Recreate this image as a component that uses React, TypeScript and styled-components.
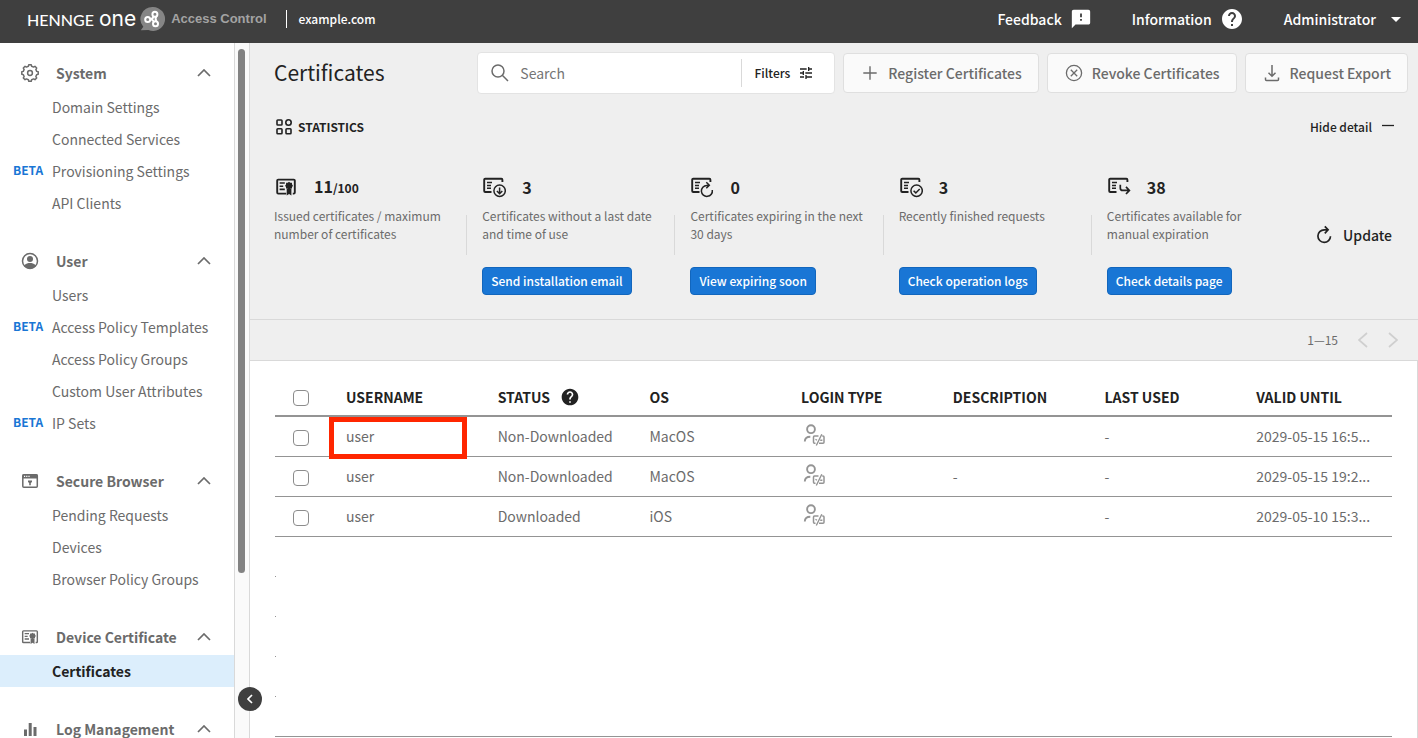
import React from "react";
import styled, { createGlobalStyle, css } from "styled-components";
import { MdArrowDropDown, MdFeedback, MdHelp, MdTune } from "react-icons/md";

const color = {
  header: "#3f3f3f",
  ink: "#222222",
  text: "#6b6b6b",
  blue: "#1976d5",
  blueEdge: "#1266bd",
  panel: "#efefef",
  line: "#d9d9d9",
  rule: "#949494",
  selected: "#dceefc",
  mark: "#ff2600",
};

const GlobalStyle = createGlobalStyle`
  * { box-sizing: border-box; }
  body {
    margin: 0;
    background: #fff;
    color: ${color.text};
    font-family: "Noto Sans CJK JP", "Open Sans", sans-serif;
    font-size: 14px;
    line-height: 20px;
  }
  button, input { font: inherit; color: inherit; }
  a { color: inherit; text-decoration: none; }
  svg { display: block; flex: none; }
`;

/* ---------- page frame ---------- */

const Page = styled.div`
  display: flex;
  flex-direction: column;
  height: 100vh;
  overflow: hidden;
`;

const Header = styled.header`
  display: flex;
  align-items: center;
  justify-content: space-between;
  flex: none;
  height: 43px;
  padding: 0 10px 5px 27px;
  background: ${color.header};
  color: #fff;
`;

const Brand = styled.div`
  display: flex;
  align-items: center;
`;

const BrandName = styled.span`
  display: flex;
  align-items: baseline;
  gap: 5px;
  font-family: Lato, sans-serif;
  font-size: 16px;
  font-weight: 500;
`;

const BrandOne = styled.span`
  font-family: Inter, sans-serif;
  font-size: 21px;
  font-weight: 400;
`;

const BrandMark = styled.span`
  margin: 0 6px 0 4px;
`;

const Product = styled.span`
  font-family: "Liberation Sans", sans-serif;
  font-size: 13px;
  font-weight: 700;
  color: #a3a3a3;
`;

const Domain = styled.span`
  margin-left: 19px;
  padding-left: 12px;
  border-left: 1px solid #fff;
  font-size: 12px;
  font-weight: 500;
  line-height: 18px;
`;

const HeaderMenu = styled.nav`
  display: flex;
  align-items: center;
  gap: 40px;
`;

const HeaderButton = styled.button`
  display: flex;
  align-items: center;
  gap: 8px;
  padding: 0;
  border: 0;
  background: none;
  font-size: 14px;
  font-weight: 500;
`;

const Body = styled.div`
  position: relative;
  display: flex;
  flex: 1;
  min-height: 0;
`;

/* ---------- sidebar ---------- */

const Sidebar = styled.nav`
  flex: none;
  width: 235px;
  padding-top: 12px;
  overflow: hidden;
  border-right: 1px solid ${color.line};
`;

const Group = styled.section`
  margin-bottom: 24px;
`;

const GroupButton = styled.button`
  display: flex;
  align-items: center;
  width: 100%;
  height: 36px;
  padding: 0 23px 0 20px;
  border: 0;
  background: none;
  text-align: left;
  font-weight: 700;
`;

const GroupName = styled.span`
  flex: 1;
  margin-left: 16px;
`;

const NavLink = styled.a<{ $current?: boolean }>`
  display: grid;
  grid-template-columns: 39px 1fr;
  align-items: center;
  height: 32px;
  padding-left: 13px;
  white-space: nowrap;
  ${(p) =>
    p.$current &&
    css`
      background: ${color.selected};
      color: ${color.ink};
      font-weight: 700;
    `}
`;

const Beta = styled.span`
  padding-bottom: 2px;
  color: ${color.blue};
  font-size: 12px;
  font-weight: 700;
`;

const ScrollTrack = styled.div`
  flex: none;
  width: 15px;
  padding: 6px 4px 0 3px;
  background: #fafafa;
  border-right: 1px solid ${color.line};
`;

const ScrollThumb = styled.div`
  height: 76%;
  border-radius: 4px;
  background: #828282;
`;

const CollapseButton = styled.button`
  position: absolute;
  left: 238px;
  bottom: 27px;
  display: grid;
  place-items: center;
  width: 24px;
  height: 24px;
  padding: 0;
  border: 0;
  border-radius: 50%;
  background: ${color.header};
  color: #fff;
`;

/* ---------- top of main column ---------- */

const Main = styled.main`
  display: flex;
  flex: 1;
  flex-direction: column;
  min-width: 0;
`;

const Summary = styled.section`
  padding-bottom: 24px;
  background: ${color.panel};
  border-bottom: 1px solid ${color.line};
`;

const Toolbar = styled.div`
  display: flex;
  align-items: center;
  gap: 8px;
  padding: 9px 10px 0 24px;
`;

const Title = styled.h1`
  flex: 1;
  margin: 0;
  padding-bottom: 2px;
  color: ${color.ink};
  font-size: 21px;
  font-weight: 400;
  line-height: 32px;
`;

const SearchBox = styled.div`
  display: flex;
  align-items: center;
  width: 358px;
  height: 42px;
  padding: 0 8px 0 12px;
  border: 1px solid #e3e3e3;
  border-radius: 4px;
  background: #fff;
`;

const SearchInput = styled.input`
  flex: 1;
  min-width: 0;
  margin-left: 10px;
  padding: 0;
  border: 0;
  outline: 0;
  background: none;
  &::placeholder { color: #757575; opacity: 1; }
`;

const FilterButton = styled.button`
  display: flex;
  align-items: center;
  gap: 8px;
  height: 28px;
  padding: 0 12px 0 13px;
  border: 0;
  border-left: 1px solid ${color.line};
  background: none;
  color: ${color.ink};
  font-size: 12px;
  font-weight: 500;
`;

const ActionButton = styled.button`
  display: flex;
  align-items: center;
  gap: 8px;
  height: 40px;
  padding: 0 16px;
  border: 1px solid #dfdfdf;
  border-radius: 4px;
  background: #fafafa;
  font-weight: 500;
  white-space: nowrap;
`;

const StatsHead = styled.div`
  display: flex;
  align-items: center;
  justify-content: space-between;
  height: 24px;
  margin: 21px 24px 36px 26px;
  color: ${color.ink};
  font-size: 12px;
`;

const StatsTitle = styled.h2`
  display: flex;
  align-items: center;
  gap: 6px;
  margin: 0;
  font-size: 12px;
  font-weight: 700;
`;

const PlainButton = styled.button<{ $large?: boolean }>`
  display: flex;
  align-items: center;
  gap: 10px;
  padding: 0;
  border: 0;
  background: none;
  color: ${color.ink};
  font-size: ${(p) => (p.$large ? 14 : 12)}px;
  font-weight: 500;
`;

const StatsBody = styled.div`
  display: flex;
  align-items: center;
  padding: 0 26px 0 24px;
`;

const StatsGrid = styled.div`
  display: grid;
  flex: 1;
  grid-template-columns: repeat(5, 1fr);
`;

const Stat = styled.article`
  position: relative;
  padding-right: 16px;
  &:not(:last-child)::after {
    content: "";
    position: absolute;
    top: 40px;
    right: 15px;
    width: 1px;
    height: 40px;
    background: ${color.line};
  }
`;

const StatValue = styled.div`
  display: grid;
  grid-template-columns: 24px 1fr;
  gap: 16px;
  align-items: center;
  height: 24px;
  color: ${color.ink};
  font-size: 16px;
  font-weight: 700;
`;

const StatLimit = styled.small`
  font-size: 12px;
`;

const StatText = styled.p`
  height: 36px;
  margin: 8px 0 24px;
  padding-right: 16px;
  font-size: 12px;
  line-height: 18px;
`;

const StatButton = styled.button`
  display: block;
  height: 28px;
  padding: 0 8px;
  border: 1px solid ${color.blueEdge};
  border-radius: 4px;
  background: ${color.blue};
  color: #fff;
  font-size: 12px;
  font-weight: 500;
  white-space: nowrap;
`;

const ButtonSlot = styled.div`
  height: 28px;
`;

const Pager = styled.div`
  display: flex;
  align-items: center;
  justify-content: flex-end;
  flex: none;
  gap: 20px;
  height: 41px;
  padding-right: 20px;
  background: ${color.panel};
  border-bottom: 1px solid ${color.line};
  font-size: 12px;
`;

const PagerButton = styled.button`
  padding: 0;
  border: 0;
  background: none;
  color: #cfcfcf;
`;

/* ---------- table ---------- */

const TableArea = styled.section`
  flex: 1;
  min-height: 0;
  overflow: hidden;
  padding: 16px 25px 0;
  border-right: 1px solid ${color.line};
`;

const Table = styled.table`
  width: 100%;
  table-layout: fixed;
  border-spacing: 0;
  text-align: left;
`;

const HeadCell = styled.th<{ $narrow?: boolean }>`
  width: ${(p) => (p.$narrow ? "55px" : "auto")};
  height: 40px;
  padding: 1px 0 0 ${(p) => (p.$narrow ? 18 : 16)}px;
  border-bottom: 2px solid ${color.rule};
  color: ${color.ink};
  font-size: 14px;
  font-weight: 700;
`;

const HeadLabel = styled.span`
  display: flex;
  align-items: center;
  gap: 10px;
`;

const Cell = styled.td<{ $narrow?: boolean }>`
  position: relative;
  height: 40px;
  padding: 0 0 ${(p) => (p.$narrow ? 0 : 2)}px ${(p) => (p.$narrow ? 18 : 16)}px;
  border-bottom: 1px solid ${color.rule};
  white-space: nowrap;
`;

const Highlight = styled.span`
  position: absolute;
  inset: 0 15px -3px -1px;
  z-index: 1;
  border: 5px solid ${color.mark};
  pointer-events: none;
`;

const Check = styled.input`
  display: block;
  appearance: none;
  width: 16px;
  height: 16px;
  margin: 2px 0 0;
  border: 1px solid #8c8c8c;
  border-radius: 4px;
  background: #fff;
`;

const BlankCell = styled.td<{ $last: boolean }>`
  height: 40px;
  padding: 0;
  vertical-align: bottom;
  border-bottom: ${(p) => (p.$last ? `1px solid ${color.rule}` : "0")};
`;

const Tick = styled.div`
  width: 1px;
  height: 1px;
  background: ${color.rule};
`;

/* ---------- icons ---------- */

const stroke = (width: number) =>
  ({ fill: "none", stroke: "currentColor", strokeWidth: width }) as const;

const gearPoints = Array.from({ length: 8 }, (_, i) =>
  [
    [-14, 8.3],
    [-9, 6.9],
    [9, 6.9],
    [14, 8.3],
  ].map(([offset, radius]) => {
    const a = ((i * 45 + 22.5 + offset) * Math.PI) / 180;
    return `${10 + radius * Math.cos(a)},${10 + radius * Math.sin(a)}`;
  }),
)
  .flat()
  .join(" ");

const GearIcon = () => (
  <svg width="20" height="20" viewBox="0 0 20 20" {...stroke(1.5)} strokeLinejoin="round">
    <polygon points={gearPoints} />
    <circle cx="10" cy="10" r="2.4" />
  </svg>
);

const UserIcon = () => (
  <svg width="20" height="20" viewBox="0 0 20 20">
    <circle cx="10" cy="10" r="7.5" {...stroke(1.5)} />
    <circle cx="10" cy="8" r="3" fill="currentColor" />
    <path d="M4 14.5C6 12.6 8 12 10 12s4 .6 6 2.500C14.500 16.700 12.500 18 10 18s-4.500-1.300-6-3.500Z" fill="currentColor" />
  </svg>
);

const BrowserIcon = () => (
  <svg width="20" height="20" viewBox="0 0 20 20">
    <rect x="2.800" y="3.800" width="14.500" height="12.400" rx="1" {...stroke(1.5)} />
    <path d="M2.500 3.500h15v4h-15Z" fill="currentColor" />
    <path d="M4 5.300h1.200M6.200 5.300h1.200M8.400 5.300h1.200" stroke="#fff" strokeWidth="1.200" />
    <path d="M8 9.500h4v1.600l-1.200 1v2.200H9.200v-2.200L8 11.100Z" fill="currentColor" />
  </svg>
);

const MedalCertificate = ({ size, weight }: { size: number; weight: number }) => (
  <svg width={size} height={size} viewBox="0 0 24 24">
    <path d="M12.200 18.600H4.200a1 1 0 0 1-1-1V5.600a1 1 0 0 1 1-1h15.600a1 1 0 0 1 1 1v12a1 1 0 0 1-1 1h-1" {...stroke(weight)} />
    <path d="M5.600 8h5.200M5.600 11.200h3.600M5.600 14.400h5.200" {...stroke(1.600)} />
    <path d="m15 6.800 1.300.9 1.600.1.200 1.600.9 1.300-.9 1.300-.2 1.500-1.600.2-1.300.9-1.300-.9-1.600-.2-.1-1.500-.9-1.300.9-1.300.1-1.600 1.600-.1Z" fill="currentColor" />
    <path d="M12.700 13.800h4.700v6.700l-2.350-1.500-2.350 1.500Z" fill="currentColor" />
  </svg>
);

const ChartIcon = () => (
  <svg width="20" height="20" viewBox="0 0 20 20" fill="currentColor">
    <path d="M4 10.500h3v6.500H4ZM8.700 4h3v13h-3ZM13.500 8h3v9h-3Z" />
  </svg>
);

const Chevron = ({ to, width, height, weight = 1.5 }: { to: "up" | "left" | "right"; width: number; height: number; weight?: number }) => {
  const d = {
    up: `M1 ${height - 1}L${width / 2} 1L${width - 1} ${height - 1}`,
    left: `M${width - 1} 1L1 ${height / 2}L${width - 1} ${height - 1}`,
    right: `M1 1L${width - 1} ${height / 2}L1 ${height - 1}`,
  }[to];
  return (
    <svg width={width} height={height} viewBox={`0 0 ${width} ${height}`} {...stroke(weight)}>
      <path d={d} />
    </svg>
  );
};

const LogoIcon = () => (
  <svg width="25" height="26" viewBox="0 0 25 26">
    <path d="M13 1a12 12 0 1 1-4.500 23.100L.8 24.300l2.500-3.600A12 12 0 0 1 13 1Z" fill="#858585" />
    <g fill="none" stroke="#fff" strokeWidth="2">
      <circle cx="14.900" cy="8.300" r="2.500" />
      <circle cx="7.700" cy="13.500" r="2.500" />
      <circle cx="15.500" cy="17.700" r="2.500" />
      <path d="M13.800 10.700c-.7 1.900-1.700 2.400-3.600 2.600 1.800.1 2.900.7 3.600 2.300" />
      <path d="M16.200 10.500c-.9 1.600-.9 3.100.2 4.600" />
    </g>
  </svg>
);

const SearchIcon = () => (
  <svg width="20" height="20" viewBox="0 0 20 20" {...stroke(1.5)}>
    <circle cx="8" cy="8" r="6" />
    <path d="m12.300 12.300 5.700 5.700" />
  </svg>
);

const PlusIcon = () => (
  <svg width="20" height="20" viewBox="0 0 20 20" {...stroke(1.400)}>
    <path d="M10 3.300v13.400M3.300 10h13.400" />
  </svg>
);

const RevokeIcon = () => (
  <svg width="20" height="20" viewBox="0 0 20 20" {...stroke(1.300)}>
    <circle cx="10" cy="10" r="7.600" />
    <path d="m6.800 6.800 6.400 6.400M13.200 6.800l-6.400 6.400" />
  </svg>
);

const ExportIcon = () => (
  <svg width="20" height="20" viewBox="0 0 20 20" {...stroke(1.500)}>
    <path d="M10 2v11M6.500 9.700l3.500 3.500 3.500-3.500M3.500 14.500v2a1 1 0 0 0 1 1h11a1 1 0 0 0 1-1v-2" />
  </svg>
);

const GridIcon = () => (
  <svg width="16" height="16" viewBox="0 0 16 16" {...stroke(1.600)}>
    <rect x="1" y="1" width="5" height="5" rx=".8" />
    <circle cx="12.500" cy="3.500" r="2.700" />
    <rect x="1" y="9.800" width="5" height="5" rx=".8" />
    <rect x="10" y="9.800" width="5" height="5" rx=".8" />
  </svg>
);

const MinusIcon = () => (
  <svg width="12" height="12" viewBox="0 0 12 12" {...stroke(1.300)}>
    <path d="M0 4.500h12" />
  </svg>
);

const UpdateIcon = () => (
  <svg width="18" height="20" viewBox="0 0 18 20" {...stroke(1.700)}>
    <path d="M12.500 4.800H9.200a6.300 6.300 0 1 0 6.300 6.400M9.800 1.300l3.300 3.500-3.300 3.500" />
  </svg>
);

type Overlay = "down" | "renew" | "check" | "forward";

const overlays: Record<Overlay, React.ReactNode> = {
  down: (
    <>
      <circle cx="17.600" cy="15.700" r="5.700" />
      <path d="M17.600 12.500v6M14.900 16l2.700 2.700 2.700-2.700" />
    </>
  ),
  renew: <path d="M22.300 15a5.500 5.500 0 1 1-5.500-4.600h2.500M16.300 7.300l3 3-3 3" />,
  check: (
    <>
      <circle cx="17.600" cy="15.700" r="5.700" />
      <path d="m14.600 15.700 2.200 2.200 3.900-4" />
    </>
  ),
  forward: <path d="M13.300 9.700v3.200a2.500 2.500 0 0 0 2.500 2.500h6.500M19 11.800l3.400 3.600-3.400 3.600" strokeWidth="1.700" />,
};

const StatIcon = ({ overlay }: { overlay?: Overlay }) =>
  overlay ? (
    <svg width="24" height="24" viewBox="0 0 24 24" {...stroke(1.500)}>
      <path d="M9.500 17H3.200a1 1 0 0 1-1-1V4.700a1 1 0 0 1 1-1h16.200a1 1 0 0 1 1 1V7" strokeWidth="1.900" />
      <path d="M5 7.600h5M5 10.400h4M5 13.200h4" />
      {overlays[overlay]}
    </svg>
  ) : (
    <MedalCertificate size={24} weight={1.900} />
  );

const LoginTypeIcon = () => (
  <svg width="24" height="24" viewBox="0 1 24 24" fill="none" stroke="#949494" strokeWidth="1.900" role="img" aria-label="Login type">
    <circle cx="10" cy="6.200" r="3.900" />
    <path d="M3.800 18.500c0-3.200 1.800-4.700 5.500-4.700" />
    <path d="M17.500 13.100h-4a1 1 0 0 0-1 1v5.200a1 1 0 0 0 1 1h1M18 20.300h4a1 1 0 0 0 1-1v-5.200a1 1 0 0 0-1-1h-.8" strokeWidth="1.500" />
    <path d="M15.300 22.500l5.500-11.300M14.500 16.300l1.400 1M19.200 17.300h2.200" strokeWidth="1.400" />
  </svg>
);

/* ---------- data ---------- */

const groups = [
  {
    name: "System",
    icon: <GearIcon />,
    links: [{ label: "Domain Settings" }, { label: "Connected Services" }, { label: "Provisioning Settings", beta: true }, { label: "API Clients" }],
  },
  {
    name: "User",
    icon: <UserIcon />,
    links: [
      { label: "Users" },
      { label: "Access Policy Templates", beta: true },
      { label: "Access Policy Groups" },
      { label: "Custom User Attributes" },
      { label: "IP Sets", beta: true },
    ],
  },
  {
    name: "Secure Browser",
    icon: <BrowserIcon />,
    links: [{ label: "Pending Requests" }, { label: "Devices" }, { label: "Browser Policy Groups" }],
  },
  {
    name: "Device Certificate",
    icon: <MedalCertificate size={20} weight={1.700} />,
    links: [{ label: "Certificates", current: true }],
  },
  { name: "Log Management", icon: <ChartIcon />, links: [] },
] as { name: string; icon: React.ReactNode; links: { label: string; beta?: boolean; current?: boolean }[] }[];

const stats: { value: string; limit?: string; text: string; action?: string; overlay?: Overlay }[] = [
  { value: "11", limit: "/100", text: "Issued certificates / maximum number of certificates" },
  { value: "3", text: "Certificates without a last date and time of use", action: "Send installation email", overlay: "down" },
  { value: "0", text: "Certificates expiring in the next 30 days", action: "View expiring soon", overlay: "renew" },
  { value: "3", text: "Recently finished requests", action: "Check operation logs", overlay: "check" },
  { value: "38", text: "Certificates available for manual expiration", action: "Check details page", overlay: "forward" },
];

const rows = [
  { user: "user", status: "Non-Downloaded", os: "MacOS", description: "", lastUsed: "-", until: "2029-05-15 16:5...", marked: true },
  { user: "user", status: "Non-Downloaded", os: "MacOS", description: "-", lastUsed: "-", until: "2029-05-15 19:2..." },
  { user: "user", status: "Downloaded", os: "iOS", description: "", lastUsed: "-", until: "2029-05-10 15:3..." },
];

const blankRows = 5;

export default function App() {
  return (
    <Page>
      <GlobalStyle />
      <Header>
        <Brand>
          <BrandName>
            HENNGE <BrandOne>one</BrandOne>
          </BrandName>
          <BrandMark>
            <LogoIcon />
          </BrandMark>
          <Product>Access Control</Product>
          <Domain>example.com</Domain>
        </Brand>
        <HeaderMenu>
          <HeaderButton>
            Feedback <MdFeedback size={22} />
          </HeaderButton>
          <HeaderButton>
            Information <MdHelp size={24} />
          </HeaderButton>
          <HeaderButton>
            Administrator <MdArrowDropDown size={24} />
          </HeaderButton>
        </HeaderMenu>
      </Header>

      <Body>
        <Sidebar>
          {groups.map((group) => (
            <Group key={group.name}>
              <GroupButton aria-expanded="true">
                {group.icon}
                <GroupName>{group.name}</GroupName>
                <Chevron to="up" width={14} height={8} weight={1.700} />
              </GroupButton>
              {group.links.map((link) => (
                <NavLink key={link.label} href="#" $current={link.current} aria-current={link.current ? "page" : undefined}>
                  <Beta>{link.beta ? "BETA" : ""}</Beta>
                  {link.label}
                </NavLink>
              ))}
            </Group>
          ))}
        </Sidebar>
        <ScrollTrack>
          <ScrollThumb />
        </ScrollTrack>

        <Main>
          <Summary>
            <Toolbar>
              <Title>Certificates</Title>
              <SearchBox>
                <SearchIcon />
                <SearchInput type="search" placeholder="Search" aria-label="Search" />
                <FilterButton>
                  Filters <MdTune size={16} />
                </FilterButton>
              </SearchBox>
              <ActionButton>
                <PlusIcon /> Register Certificates
              </ActionButton>
              <ActionButton>
                <RevokeIcon /> Revoke Certificates
              </ActionButton>
              <ActionButton>
                <ExportIcon /> Request Export
              </ActionButton>
            </Toolbar>

            <StatsHead>
              <StatsTitle>
                <GridIcon /> STATISTICS
              </StatsTitle>
              <PlainButton>
                Hide detail <MinusIcon />
              </PlainButton>
            </StatsHead>

            <StatsBody>
              <StatsGrid>
                {stats.map((stat) => (
                  <Stat key={stat.text}>
                    <StatValue>
                      <StatIcon overlay={stat.overlay} />
                      <span>
                        {stat.value}
                        {stat.limit && <StatLimit>{stat.limit}</StatLimit>}
                      </span>
                    </StatValue>
                    <StatText>{stat.text}</StatText>
                    <ButtonSlot>{stat.action && <StatButton>{stat.action}</StatButton>}</ButtonSlot>
                  </Stat>
                ))}
              </StatsGrid>
              <PlainButton $large>
                <UpdateIcon /> Update
              </PlainButton>
            </StatsBody>
          </Summary>

          <Pager>
            <span>1—15</span>
            <PagerButton aria-label="Previous page">
              <Chevron to="left" width={10} height={16} weight={1.700} />
            </PagerButton>
            <PagerButton aria-label="Next page">
              <Chevron to="right" width={10} height={16} weight={1.700} />
            </PagerButton>
          </Pager>

          <TableArea>
            <Table>
              <thead>
                <tr>
                  <HeadCell $narrow>
                    <Check type="checkbox" aria-label="Select all" />
                  </HeadCell>
                  <HeadCell>USERNAME</HeadCell>
                  <HeadCell>
                    <HeadLabel>
                      STATUS <MdHelp size={20} />
                    </HeadLabel>
                  </HeadCell>
                  <HeadCell>OS</HeadCell>
                  <HeadCell>LOGIN TYPE</HeadCell>
                  <HeadCell>DESCRIPTION</HeadCell>
                  <HeadCell>LAST USED</HeadCell>
                  <HeadCell>VALID UNTIL</HeadCell>
                </tr>
              </thead>
              <tbody>
                {rows.map((row) => (
                  <tr key={row.until}>
                    <Cell $narrow>
                      <Check type="checkbox" aria-label={`Select ${row.user}`} />
                    </Cell>
                    <Cell>
                      {row.user}
                      {row.marked && <Highlight />}
                    </Cell>
                    <Cell>{row.status}</Cell>
                    <Cell>{row.os}</Cell>
                    <Cell>
                      <LoginTypeIcon />
                    </Cell>
                    <Cell>{row.description}</Cell>
                    <Cell>{row.lastUsed}</Cell>
                    <Cell>{row.until}</Cell>
                  </tr>
                ))}
                {Array.from({ length: blankRows }, (_, i) => (
                  <tr key={i} aria-hidden="true">
                    <BlankCell colSpan={8} $last={i === blankRows - 1}>
                      {i < blankRows - 1 && <Tick />}
                    </BlankCell>
                  </tr>
                ))}
              </tbody>
            </Table>
          </TableArea>
        </Main>

        <CollapseButton aria-label="Collapse menu">
          <Chevron to="left" width={6} height={10} weight={1.700} />
        </CollapseButton>
      </Body>
    </Page>
  );
}
